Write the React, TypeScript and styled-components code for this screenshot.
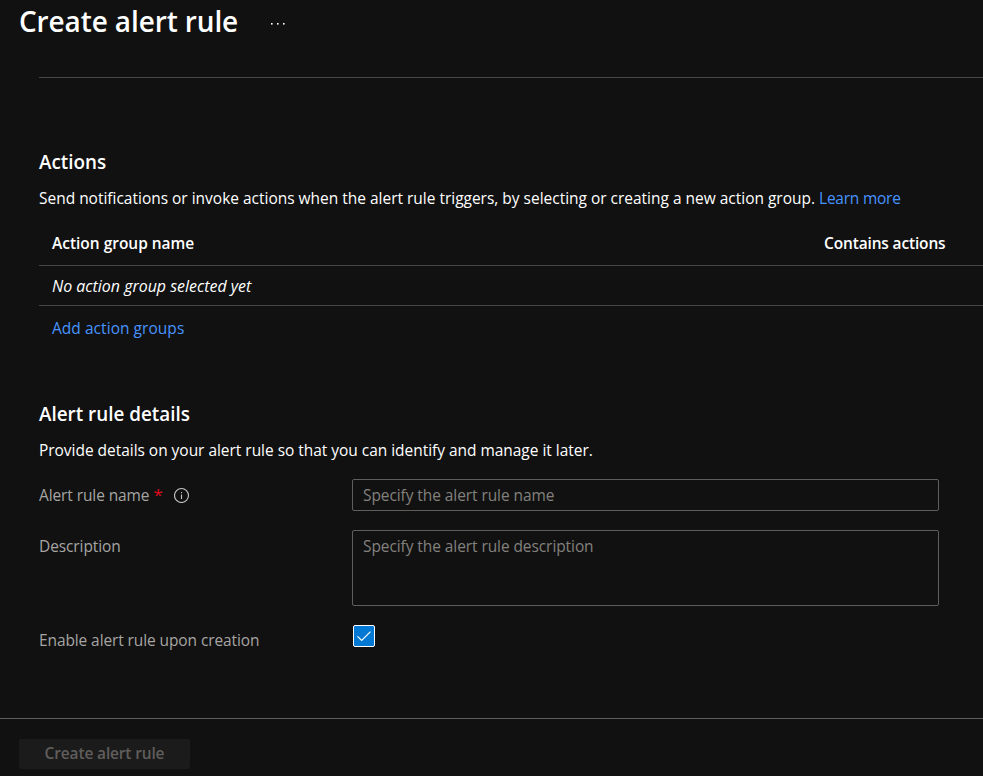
import React, { useState } from "react";
import styled, { createGlobalStyle } from "styled-components";

const GlobalStyle = createGlobalStyle`
  * { box-sizing: border-box; }
  body {
    margin: 0;
    background: #111111;
    color: #ffffff;
    font-family: "Open Sans", "Noto Sans", sans-serif;
    font-size: 15.47px;
    line-height: 22px;
    overflow: hidden;
  }
`;

const Page = styled.div`
  display: flex;
  flex-direction: column;
  height: 776px;
  overflow: hidden;
`;

const Header = styled.header`
  display: flex;
  align-items: flex-start;
  gap: 33px;
  height: 77px;
  padding: 3px 0 0 19px;
`;

const Title = styled.h1`
  margin: 0;
  font-size: 27.95px;
  letter-spacing: -0.09px;
  line-height: 36px;
  font-weight: 600;
  white-space: nowrap;
`;

const MoreButton = styled.button`
  display: flex;
  padding: 0;
  margin-top: 19px;
  border: 0;
  background: none;
  color: #ffffff;
`;

const Content = styled.main`
  display: flex;
  flex: 1;
  flex-direction: column;
  margin-left: 39px;
  border-top: 1px solid #484644;
`;

const Section = styled.section<{ $top: number }>`
  display: flex;
  flex-direction: column;
  padding-top: ${(p) => p.$top}px;
`;

const SectionTitle = styled.h2`
  margin: 0 0 12px;
  font-size: 18.85px;
  line-height: 26px;
  font-weight: 600;
`;

const Intro = styled.p<{ $tracking?: number }>`
  margin: 0;
  letter-spacing: ${(p) => p.$tracking ?? 0}px;
  white-space: nowrap;
`;

const Link = styled.a<{ $tracking?: number }>`
  color: #4894fe;
  letter-spacing: ${(p) => p.$tracking ?? 0}px;
  text-decoration: none;
  cursor: pointer;
`;

const Groups = styled.div`
  display: flex;
  flex-direction: column;
  margin-top: 12px;
`;

const GroupHead = styled.div`
  display: grid;
  grid-template-columns: 772px 1fr;
  height: 45px;
  padding: 11px 0 0 13px;
  border-bottom: 1px solid #484644;
  font-weight: 600;
`;

const HeadCell = styled.span<{ $tracking?: number }>`
  letter-spacing: ${(p) => p.$tracking ?? 0}px;
`;

const GroupRow = styled.div<{ $line?: boolean }>`
  height: 40px;
  padding: ${(p) => (p.$line ? "9px" : "11px")} 0 0 13px;
  border-bottom: ${(p) => (p.$line ? "1px solid #484644" : "0")};
`;

const EmptyNote = styled.em`
  font-size: 15.95px;
`;

const Form = styled.div`
  display: flex;
  flex-direction: column;
  gap: 19px;
  margin-top: 18px;
`;

const Field = styled.div`
  display: grid;
  grid-template-columns: 313px 587px;
  align-items: start;
`;

const Label = styled.label<{ $top?: number }>`
  display: flex;
  align-items: center;
  padding-top: ${(p) => p.$top ?? 5}px;
  color: #a6a5a3;
  letter-spacing: -0.09px;
`;

const Required = styled.span`
  margin: 0 11px 0 4px;
  color: #e00b1c;
  font-size: 17px;
`;

const controlStyle = `
  display: block;
  width: 587px;
  margin: 0;
  border: 1px solid #605e5c;
  border-radius: 2px;
  background: transparent;
  color: #ffffff;
  font: inherit;
  letter-spacing: -0.07px;
  line-height: 22px;
  outline: none;
  resize: none;
  &::placeholder { color: #83817e; opacity: 1; }
`;

const TextInput = styled.input`
  ${controlStyle}
  height: 32px;
  padding: 4px 10px;
`;

const TextArea = styled.textarea`
  ${controlStyle}
  height: 76px;
  padding: 4px 10px;
`;

const Checkbox = styled.button`
  display: flex;
  align-items: center;
  justify-content: center;
  width: 22px;
  height: 22px;
  margin-left: 1px;
  padding: 0;
  border: 1px solid #ffffff;
  border-radius: 2px;
  background: #0078d4;
`;

const Footer = styled.footer`
  height: 58px;
  padding: 20px 19px 0;
  border-top: 1px solid #605e5c;
`;

const SubmitButton = styled.button`
  display: block;
  width: 171px;
  height: 30px;
  padding: 0 0 2px;
  border: 0;
  border-radius: 2px;
  background: #1b1b1b;
  color: #605e5c;
  font: inherit;
  letter-spacing: -0.14px;
  line-height: 28px;
  font-weight: 600;
`;

const MoreIcon = () => (
  <svg width="14" height="4" viewBox="0 0 14 4" fill="currentColor">
    <rect x="0" y="1" width="1.6" height="1.6" />
    <rect x="6" y="1" width="1.6" height="1.6" />
    <rect x="12" y="1" width="1.6" height="1.6" />
  </svg>
);

const InfoIcon = () => (
  <svg width="16" height="16" viewBox="0 0 16 16" fill="none" stroke="#c8c6c4">
    <circle cx="7.5" cy="8.5" r="7" strokeWidth="1.1" />
    <path d="M7.5 7.5v4.5" strokeWidth="1.1" />
    <path d="M7.5 5v1.2" strokeWidth="1.1" />
  </svg>
);

const CheckIcon = () => (
  <svg width="16" height="16" viewBox="0 0 16 16" fill="none" stroke="#ffffff">
    <path d="M1.5 8.3l4.2 4.2L14.5 3.7" strokeWidth="1.2" />
  </svg>
);

export default function App() {
  const [enabled, setEnabled] = useState(true);
  return (
    <>
      <GlobalStyle />
      <Page>
        <Header>
          <Title>Create alert rule</Title>
          <MoreButton aria-label="More"><MoreIcon /></MoreButton>
        </Header>
        <Content>
          <Section $top={71}>
            <SectionTitle>Actions</SectionTitle>
            <Intro>
              Send notifications or invoke actions when the alert rule triggers, by selecting or creating a new action group.{" "}
              <Link $tracking={-0.22}>Learn more</Link>
            </Intro>
            <Groups>
              <GroupHead>
                <HeadCell>Action group name</HeadCell>
                <HeadCell $tracking={-0.14}>Contains actions</HeadCell>
              </GroupHead>
              <GroupRow $line><EmptyNote>No action group selected yet</EmptyNote></GroupRow>
              <GroupRow><Link $tracking={0.06}>Add action groups</Link></GroupRow>
            </Groups>
          </Section>
          <Section $top={55}>
            <SectionTitle>Alert rule details</SectionTitle>
            <Intro $tracking={-0.02}>Provide details on your alert rule so that you can identify and manage it later.</Intro>
            <Form>
              <Field>
                <Label htmlFor="name">Alert rule name<Required>*</Required><InfoIcon /></Label>
                <TextInput id="name" placeholder="Specify the alert rule name" />
              </Field>
              <Field>
                <Label htmlFor="description">Description</Label>
                <TextArea id="description" placeholder="Specify the alert rule description" />
              </Field>
              <Field>
                <Label htmlFor="enable" $top={4}>Enable alert rule upon creation</Label>
                <Checkbox id="enable" role="checkbox" aria-checked={enabled} onClick={() => setEnabled(!enabled)}>
                  {enabled && <CheckIcon />}
                </Checkbox>
              </Field>
            </Form>
          </Section>
        </Content>
        <Footer><SubmitButton disabled>Create alert rule</SubmitButton></Footer>
      </Page>
    </>
  );
}
